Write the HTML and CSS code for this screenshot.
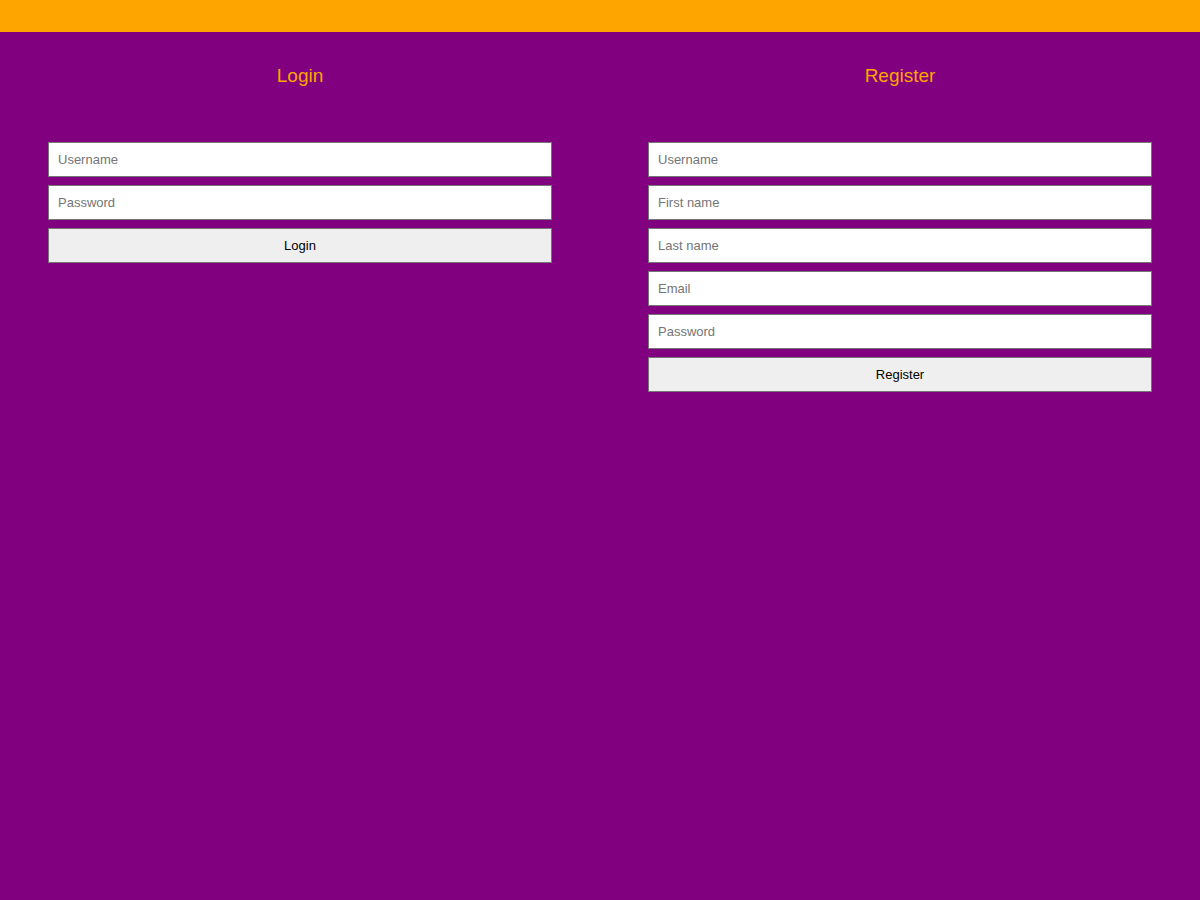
FILE: index.html
```html
<!DOCTYPE html>
<html>
<head>
<meta charset="utf-8">
<link rel="stylesheet" href="styles.css">
</head>
<body>
<header class="topbar"></header>
<main class="panels">
  <section class="panel">
    <h2 class="panel-title">Login</h2>
    <form class="form">
      <input class="field" type="text" placeholder="Username">
      <input class="field" type="password" placeholder="Password">
      <button class="btn" type="button">Login</button>
    </form>
  </section>
  <section class="panel">
    <h2 class="panel-title">Register</h2>
    <form class="form">
      <input class="field" type="text" placeholder="Username">
      <input class="field" type="text" placeholder="First name">
      <input class="field" type="text" placeholder="Last name">
      <input class="field" type="text" placeholder="Email">
      <input class="field" type="password" placeholder="Password">
      <button class="btn" type="button">Register</button>
    </form>
  </section>
</main>
</body>
</html>
```

FILE: styles.css
```css
html, body {
  margin: 0;
  padding: 0;
  height: 100%;
}
body {
  background: #800080;
  font-family: "Liberation Sans", Arial, sans-serif;
}
.topbar {
  height: 32px;
  background: #ffa500;
}
.panels {
  display: grid;
  grid-template-columns: 1fr 1fr;
}
.panel {
  padding: 33px 48px 0;
}
.panel-title {
  margin: 0;
  height: 22px;
  line-height: 22px;
  font-size: 19px;
  font-weight: normal;
  color: #ffa500;
  text-align: center;
}
.form {
  display: flex;
  flex-direction: column;
  gap: 8px;
  margin-top: 55px;
}
.field, .btn {
  box-sizing: border-box;
  height: 35px;
  width: 100%;
  margin: 0;
  font-family: "Liberation Sans", Arial, sans-serif;
  font-size: 13px;
  border: 1px solid #767676;
  border-radius: 0;
}
.field {
  background: #fff;
  padding: 0 9px;
  color: #000;
}
.field::placeholder {
  color: #757575;
}
.btn {
  background: #efefef;
  color: #000;
  text-align: center;
  padding: 0;
}
```
